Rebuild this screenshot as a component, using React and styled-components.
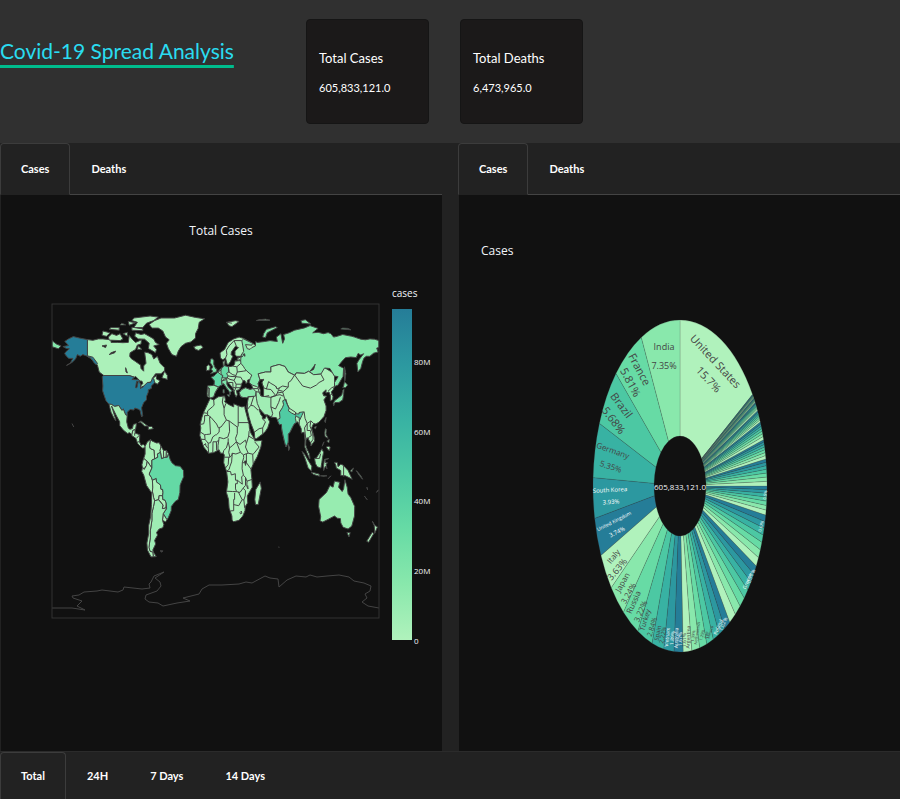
import React, { useState } from 'react';
import styled, { createGlobalStyle } from 'styled-components';

const GlobalStyle = createGlobalStyle`
  *, *::before, *::after { box-sizing: border-box; }
  body { margin: 0; background: #fff; color: #fff; font-family: Lato, "Liberation Sans", sans-serif; }
`;

const Page = styled.div`
  display: flex;
  flex-direction: column;
  min-height: calc(100vh - 1px);
  background: #222;
`;

const Header = styled.header`
  display: grid;
  grid-template-columns: 34% 1fr;
  min-height: 143px;
  background: #303030;
`;

const Title = styled.h1`
  margin: 0;
  padding-top: 36px;
  font-size: 21px;
  line-height: 30px;
  font-weight: 400;
`;

const TitleLink = styled.a`
  color: #2adcf0;
  text-decoration: underline;
  text-decoration-color: #00bc8c;
  text-decoration-thickness: 3px;
  text-underline-offset: 6px;
  white-space: nowrap;
`;

const Stats = styled.div`
  display: flex;
  gap: 31px;
  align-items: flex-start;
  padding-top: 19px;
`;

const StatCard = styled.section`
  width: 123px;
  min-height: 105px;
  padding: 24px 12px 16px;
  border: 1px solid #151515;
  border-radius: 4px;
  background: #1b1919;
`;

const StatLabel = styled.h2`
  margin: 0;
  font-size: 13px;
  line-height: 28px;
  font-weight: 400;
`;

const StatValue = styled.p`
  margin: 0;
  font-size: 11px;
  line-height: 32px;
`;

const Panels = styled.main`
  flex: 1;
  display: grid;
  grid-template-columns: 1fr 1fr;
  gap: 16px;
`;

const Panel = styled.section`
  display: flex;
  flex-direction: column;
  min-width: 0;
`;

const TabList = styled.div`
  display: flex;
  height: ${(p) => (p.$bottom ? 48 : 52)}px;
  border-bottom: ${(p) => (p.$bottom ? 'none' : '1px solid #444')};
  border-top: ${(p) => (p.$bottom ? '1px solid #2b2b2b' : 'none')};
`;

const Tab = styled.button`
  padding: 0 20px;
  margin-bottom: -1px;
  font: 700 11px/20px Lato, "Liberation Sans", sans-serif;
  color: #fff;
  white-space: nowrap;
  cursor: pointer;
  border: 1px solid ${(p) => (p.$active ? '#3c3c3c' : 'transparent')};
  border-bottom-color: ${(p) => (p.$active ? '#222' : 'transparent')};
  border-radius: 4px 4px 0 0;
  background: ${(p) => (p.$active ? '#222' : 'none')};
`;

const ChartArea = styled.div`
  flex: 1;
  background: #111;
  border-left: 1px solid #222;
`;

const Chart = styled.svg`
  display: block;
  width: 100%;
  height: auto;
  font-family: "Open Sans", "DejaVu Sans", sans-serif;
`;

const ChartText = styled.text`
  font-size: ${(p) => p.$size}px;
  fill: ${(p) => p.$fill || '#f2f5fa'};
`;

const Land = styled.path`
  fill: ${(p) => p.$fill};
  stroke: #444;
  stroke-width: 1;
  stroke-linejoin: round;
`;

const SCALE = ['#b0f2bc', '#89e8ac', '#67dba5', '#4cc8a3', '#38b2a3', '#2c98a0', '#257d98'];
const MINT = '#acf1ba';

const MAP_W = 327;
const MAP_H = 314;

function project(points, close = true) {
  const d = points.trim().split(/\s+/).map((pair) => {
    const [lon, lat] = pair.split(',').map(Number);
    return `${(((lon + 180) / 360) * MAP_W).toFixed(1)},${(((90 - lat) / 180) * MAP_H).toFixed(1)}`;
  });
  return `M${d.join('L')}${close ? 'Z' : ''}`;
}

const COUNTRIES = [
  // Eurasian land mass
  [MINT, '-9,37 -9.3,38.7 -8.8,43 -2,43.4 -1.2,44.5 -1.2,46 -4.7,48 -1.5,48.8 0,49.6 2.5,51 4.5,52.3 7,53.5 8.7,54 8.2,57 10.5,57.6 10,55 11,54 14.2,54 19,54.4 21,55.5 21.5,57.5 24,57.3 24,59 28,59.6 30,60 23,60 21.5,61 21.5,63 25.3,65 22,65.8 17.5,62.5 17.2,61 19,60 16.5,57 14.2,55.4 12.8,55.5 11,59 8,58 5.5,59 5,62 10,64 14,68 20,70 26,71 31,70.3 41,67.5 60,60 100,60 131,50 131,42.7 129.7,41 127.5,39.5 129.4,37 129,35.2 126.4,34.5 126.5,37.5 125,39.5 121.5,39 121.8,40.8 118,39.1 119,37.4 122.4,37.2 119.3,35 121.8,31.5 121.8,29 119.5,25.5 114,22.3 110.5,21.2 108,21.5 105.8,19 109,13 109,11.5 105,8.6 105,10.3 102.5,12.2 101,13.4 99.5,12 99.3,9.3 100.5,7.2 103.4,4 104.2,1.3 103.5,1.4 100.5,5 98.3,8 98.5,12 97.5,16.5 94.5,16 94.3,18.5 92.2,21 90.5,22.5 87,21.5 85,19.7 82,16.5 80.2,15.5 80.2,12 79.8,10.3 77.6,8 76,11 73.8,16 72.8,19 72.7,21 70.5,20.8 69,22.3 67,24.8 61.5,25.1 57.2,26.5 54.5,26.5 51,28.5 48.5,30 48,29.5 50,26.5 51.5,25.8 51.6,24.2 54.5,24.2 56.3,26 59.7,22.5 57.5,19 55,17 52,15.5 45,12.8 43.3,12.8 42.7,16.5 39,21.5 37,25 34.9,29.5 34.3,31.3 36,35.8 36,36.8 34,36.3 30.5,36.4 27.5,37 26.2,39.2 29,41 33,42 38,41 41.5,41.5 39,44 37,45.2 38.5,47 35.2,46.3 35,45 33.5,44.5 32.5,46 30.7,46.2 28.6,44 28,42.5 26,40.8 23,40.5 24,38 22.7,36.6 21.2,38.3 19.4,41.5 14,45 12.5,45.5 12.4,44 14,42.5 18.4,40.2 16.6,39.7 16,38 15,40 12,42 9,44.3 6,43.2 3.2,43.2 3,41.8 -.3,39.3 -2,36.8 -5.5,36.1'],
  // Russia, its arctic islands and far east
  ['#85e7ab', '31,70 33,69.4 41,67.5 40,66.4 33,66.7 35,64.4 38,64 40,65 44,66 44,68.5 46,68 54,68.5 60,69 68,68.5 67,71 72,73 74,67.5 76,70 75,72.5 81,73.5 87,75 98,76.3 104,77.6 113,76 107,73.5 113,73.8 119,73 124,73.6 127,73 130,71 134,71.5 140,72.5 150,71.5 153,71 160,69.8 165,69.5 170,70 175,69.8 180,69 180,65 177.5,64.7 179,62.5 174,61.8 170,60 166,60 163.5,59 162,57 160,53 156.7,51 155.7,56 158,58 163,61.5 160,60.7 157,61.7 155,59.3 149,59.6 143,59.2 139,57 135.5,54.7 141,53.2 140.5,48.5 135,43.5 131,42.7 131,45 135,48.3 130.8,48.7 126,53 120,53.3 116,49.8 108,49.5 102.5,51.4 98,50.2 89,50.5 87,49.2 80,51 76.5,54.2 70,55.3 61,54 61,51 55,51 47,50 49,46.5 47,44.5 47.5,43 48,41.8 45,42.7 41,43.4 39,44 37,45.2 38.2,47.2 40,49.3 38,50 34,51.8 32,53 31,54 28,56 27.7,57.5 28,59.5 30,60 28,60.5 31,62.8 30,66 29,69'],
  ['#85e7ab', '52,71 55,70.7 57,73.5 68,76.5 66,77 56,75.5 53,73'],
  ['#85e7ab', '95,79 105,78.5 99,81 94,80.5'], ['#85e7ab', '138,75.7 149,75.2 146,76 140,76.2'],
  ['#85e7ab', '142,54 143.5,50 142.5,46 142,48'], [MINT, '45,80.5 60,80.7 55,81.3 48,81'],
  [MINT, '12,79.5 22,80.4 26,80 18,77 15,77.5'],
  // Western and southern Asia
  [MINT, '47,50 55,51 61,51 61,54 70,55.3 76.5,54.2 80,51 87,49.2 83,46 80.3,45 80,42.3 74,43 70.5,42 68,41.3 66,43 61,44.5 58.5,45.5 56,41.3 53,42 51,44.8 53,46.8 49,46.5'],
  [MINT, '87.5,49 90.9,46.5 96,43 104.5,41.8 111,43.5 114,45 119.5,46.5 116,49.8 108,49.5 102.5,51.4 98,50.2 89,50.5'],
  ['#50cba3', '68.2,23.7 71,24.5 70.5,28 73.5,30.5 75,32.3 74,34.5 77.5,35.5 79,32.5 81,30.2 80.3,28.8 84,27.4 88,26.4 88.2,28 89,27 92,27 92,27.8 97,28.2 95,26 93.2,24 92.3,23 92.2,25 89.8,25.3 88.5,26 88,24.5 89,22 87,21.5 85,19.7 82,16.5 80.2,15.5 80.2,12 79.8,10.3 77.6,8 76,11 73.8,16 72.8,19 72.7,21 70.5,20.8 69,22.3'],
  ['#a0edb4', '44.5,39.7 48,39.5 50,37.4 54,37 61,36.5 61,31 63,27.2 61.5,25.1 57.2,26.5 54.5,26.5 51,28.5 48.5,30 46,33 45,36'],
  ['#8be8ad', '26.2,39.2 29,41 33,42 38,41 41.5,41.5 44.5,39.7 44,37.2 36,36.8 34,36.3 30.5,36.4 27.5,37'],
  // Europe
  ['#60d7a5', '-1.5,43.4 -1.2,46 -4.7,48 -1.5,48.8 0,49.6 2.5,51 6,49.5 8,49 7,47.5 6.5,46 7.5,43.8 3,42.5'],
  ['#68dba5', '7,53.5 8.7,54 9,54.8 14.2,54 14.8,51 12.2,50.2 13.8,48.8 13,47.6 7.6,47.7 8,49 6,50 6,52'],
  ['#94ebaf', '-8.8,43 -1.8,43.4 3.2,42.4 -.3,39.3 -2,36.8 -5.5,36.1 -7.3,37.2 -7,41.8 -8.8,42'],
  ['#7ce2a9', '7,44 7,46 12.5,46.7 12.4,44 14,42.5 18.4,40.2 16.6,39.7 16,38 15,40 12,42 9,44.3'],
  ['#7ce2a9', '8.3,39 9.8,39 9.5,41 8.3,41'], ['#7ce2a9', '12.5,38 15.5,38 15,36.8'],
  ['#79e1a8', '-5.5,50 1.3,51.2 1.5,52.8 0,53 -2,55.5 -1.8,57.5 -3.2,58.6 -5.3,58.5 -6,56.5 -3,54 -4.7,52.5 -3,51.5'],
  [MINT, '-10,51.7 -6.3,52.2 -6,54.5 -8,55.2 -10,54'],
  // Africa
  [MINT, '-6,35.8 -2,35 3,36.8 10,37.3 11,35 10,34 15,32.3 20,31 20,32.8 25,31.7 29,31 32.3,31.3 32.5,30 34,27 36,23 37,21 37.3,18.8 39,16 43,12.5 43.3,11.5 51.2,11.8 50,8 46,2.5 41.5,-1.8 39,-5 40,-10 40.5,-15 35,-20 35.5,-24 32.8,-26 32.5,-28.5 30,-31.5 26,-34 20,-34.8 18.3,-34 18,-31.5 15,-27 14.3,-22 12,-18 13.7,-12 12.2,-6 9,-1 9.7,3.5 8.5,4.5 5.5,4.5 4,6.4 -2,4.8 -7.5,4.4 -13,8 -15,11 -17.3,14.7 -16.2,19 -17,21 -15,25 -13,28 -9.8,31.5'],
  [MINT, '49.3,-12 50.4,-15.7 47,-25 44,-25 43.3,-22 44.4,-16.3'],
  // North America
  [MINT, '-141,69.6 -141,60 -137,58.5 -134,57 -130,55 -128,51 -123,49 -95,49 -89,48 -84,46.5 -82.5,45.3 -82.5,42 -79,42.8 -76,44 -74.5,45 -71,45.3 -69,47.3 -67,45 -64,44 -61,46 -65,47 -65,49 -70,47 -66,50 -60,50 -56,52 -56,53.5 -61,56 -64,60 -68,58.5 -70,61 -74,62 -78,62.5 -77,58 -76.5,56 -79,54.5 -79,51.5 -82,53 -82.5,55 -88,57 -93,58.8 -94.5,60 -94,62 -88,64 -86,66.5 -82,67 -81.5,69.5 -88,68 -91,69.5 -95,72 -96,68 -102,67.8 -108,68 -115,68 -115,69.5 -124,70 -129,70 -135,69.2'],
  ['#257d98', '-141,69.6 -150,70.5 -156.5,71.3 -162,70 -166,68.5 -163,67 -162,66.2 -168,65.6 -164,64.5 -161,64.3 -165,62.5 -166,61.5 -164,60 -161.5,58.8 -157,58.8 -160,56 -164,54.8 -158,56.5 -154,58.5 -152,61 -149,60 -146,61 -141,60 -137,58.9 -134,56.5 -131,55 -130,56 -135,59.5 -141,60.3'],
  ['#257d98', '-124.7,48.4 -124,43 -124.3,40.3 -122.5,37.5 -120.6,34.5 -117.2,32.5 -114.8,32.5 -111,31.3 -106.5,31.8 -103,29 -101.5,29.8 -99,26.5 -97.2,26 -97,28 -94,29.6 -90,29.2 -88.8,30.4 -85,29.7 -83,29 -82.5,27.5 -81.2,25.2 -80.2,26 -81.4,30.5 -79,33.5 -76,35 -76,37 -74,39.5 -74,40.8 -70.5,41.7 -70.7,43 -67,44.8 -67.8,47 -69.2,47.4 -71.5,45 -75,45 -79,43 -82.5,42 -82.5,45.5 -84.5,46.5 -89.5,48 -95,49 -123,49'],
  ['#a5efb6', '-117.2,32.5 -114.8,32.5 -111,31.3 -106.5,31.8 -103,29 -101.5,29.8 -99,26.5 -97.2,26 -97.8,22.5 -96,19 -94.5,18.2 -91.5,18.6 -90.4,21 -87,21.5 -88,18.2 -91,17.5 -92,15 -94.5,16.2 -97,15.8 -101.5,17.7 -105.5,20.3 -105.5,22.5 -109,25.8 -112.5,29.5 -114.5,31.5 -113,29 -110,24 -109.8,23 -112.2,25 -115,28'],
  [MINT, '-92,15 -91,17.5 -88.5,18 -88.5,16 -83.3,15 -83.7,11 -82,9 -79.5,9.5 -77.5,8.5 -78,7.5 -80.5,7.4 -83,8.5 -85.7,10 -87.7,13 -92,14.5'],
  [MINT, '-85,22 -82,23 -77,21 -74.5,20 -78,20 -82,22'], [MINT, '-74,19.8 -70,19.8 -68.5,18.5 -74,18'],
  [MINT, '-73,78.3 -67,80.5 -60,82 -45,82 -33,83.6 -22,82.3 -12,81.5 -18,79.5 -19,76 -22,73 -22,70.5 -27,68.3 -33,67.5 -38,65.5 -41,63 -43,60 -48,61 -52,64.5 -54,67.5 -51,69.5 -55,71 -58,74.5 -63,76.2 -70,76.2'],
  [MINT, '-62,66.8 -66,68 -68,70 -73,71.5 -78,73 -82,72.5 -88,73.5 -89,71.5 -85,70 -78,69.8 -73,67.5 -74,64.5 -69,63 -66,62 -65,64 -68,66'],
  [MINT, '-117,69.3 -105,69 -102,70 -105,73 -109,72 -114,73 -118,71'],
  [MINT, '-125,72 -120,71.5 -116,73.5 -124,74.5'],
  [MINT, '-90,76.5 -80,76.5 -76,79 -68,80.5 -63,82.5 -72,83.1 -90,82 -92,80.5 -86,79.5'],
  [MINT, '-92,75 -80,74.7 -80,75.7 -92,76.7'], [MINT, '-96,80 -88,79.3 -95,77.8'],
  [MINT, '-117,75.5 -106,75 -106,76.5 -115,76.5'], [MINT, '-102,73 -97,71.5 -97,73.8'],
  [MINT, '-105,78 -99,78 -103,79'], [MINT, '-86,64 -81,64 -85,66'], [MINT, '-59,47.7 -53,46.8 -53,49 -56,51.5'],
  [MINT, '-24,65.5 -22,64 -18.5,63.4 -13.8,65 -16,66.5 -21,66'],
  ['#85e7ab', '-180,69 -175,67 -170,66 -173,64.3 -180,65.5'],
  // South America
  ['#a8f0b7', '-77.5,8.5 -75,11 -71.5,12.3 -72.5,9 -72,7.2 -67.5,6.2 -67,1.2 -70,.5 -70,-4 -75,-.2 -77.5,.8 -79,1.5 -77.5,4'],
  [MINT, '-71.5,12.3 -70,11.5 -65,10.3 -62,10.5 -60,8.5 -61,6 -60.5,5 -64,4 -63.5,2.2 -67,1.2 -67.5,6.2 -72,7.2 -72.5,9'],
  [MINT, '-60,8.5 -57.3,6 -57,2 -59.5,1.3 -60.5,5 -61,6'], [MINT, '-57.3,6 -54,6 -54.3,2.2 -57,2'], [MINT, '-54,6 -51.7,4.2 -53,2.2 -54.3,2.2'],
  [MINT, '-79,1.5 -77.5,.8 -75.2,-.2 -76,-2.5 -78.5,-4.5 -80.3,-4.3 -81,-2.2 -80,0'],
  [MINT, '-80.3,-3.5 -78.5,-4.8 -76,-2.5 -75.2,-.2 -70,-4 -73,-7.5 -70.5,-9.5 -69.5,-11 -69,-15 -69.5,-17.5 -70.4,-18.3 -76,-14 -79,-8 -81.2,-6'],
  [MINT, '-69.5,-11 -65.3,-10 -65,-12 -60.5,-13.7 -60,-16.2 -58.2,-16.3 -57.8,-18 -58.2,-20 -62,-19.8 -62.7,-22.2 -67,-22.8 -68.2,-21 -69.5,-17.5 -69,-15'],
  [MINT, '-62.5,-22.2 -62,-19.8 -58.2,-20 -57.9,-22.1 -55.8,-22.3 -54.3,-24 -54.7,-27 -58.6,-27.3 -57.8,-25.2'],
  ['#64d9a5', '-51.7,4.2 -50,1 -48,-1 -44,-2.7 -39,-3 -35.2,-5.5 -35,-9 -37.5,-12 -39,-14 -39.2,-18 -41,-22 -44.5,-23.2 -48.5,-26 -48.8,-28.5 -52,-32.5 -53.4,-33.7 -57.6,-30.2 -53.8,-27.2 -54.3,-24 -55.8,-22.3 -57.9,-22.1 -58.2,-20 -57.8,-18 -58.2,-16.3 -60,-16.2 -60.5,-13.7 -65,-12 -65.3,-10 -69.5,-11 -70.5,-9.5 -73,-7.5 -70,-4 -70,.5 -67,1.2 -63.5,2.2 -64,4 -60.5,5 -59.5,1.3 -56,2 -53,2.2'],
  [MINT, '-57.6,-30.2 -53.4,-33.7 -55,-34.9 -58.3,-34'],
  ['#9eedb4', '-67,-22.8 -62.7,-22.2 -57.8,-25.2 -58.6,-27.3 -54.7,-27 -53.8,-27.2 -57.6,-30.2 -58.3,-34 -56.8,-36.5 -58,-38.3 -62,-39 -65,-41 -63.7,-42.5 -67,-45.5 -65.8,-47.5 -69,-51 -68.3,-52.3 -65.2,-54.8 -68.5,-54.9 -69,-52.2 -72,-51.8 -73.3,-49.5 -71.8,-44 -71.8,-40 -70,-34 -70,-30 -68.3,-26'],
  [MINT, '-70.4,-18.3 -69.5,-17.5 -68.2,-21 -67,-22.8 -68.3,-26 -70,-30 -70,-34 -71.8,-40 -71.8,-44 -73.3,-49.5 -72,-51.8 -69,-52.2 -68.5,-54.9 -71,-55 -75,-51 -75.5,-47 -73.5,-41.5 -73.5,-37 -71.5,-32 -70.5,-25'],
  ['#444', '-61,-51.5 -58,-51.5 -59,-52.3'],
  // Eastern Asia and Oceania
  ['#8ae8ac', '130,31.5 131.5,33.5 136,33.6 140,35 141,38 141.5,41.3 140,40.5 139,37.8 136,36.5 131,34.5 129.7,33'],
  ['#8ae8ac', '140,42 143,42 145.5,43.5 142,45.5 141,43'],
  [MINT, '120.2,23 121.8,25 121,22'], [MINT, '80,9.5 81.8,7.5 80.5,6'], [MINT, '108.7,19.3 111,19.8 110,18.3'],
  ['#a5efb6', '95.3,5.5 98,4 103,-.5 106,-3 105.7,-5.8 102,-4 98.5,1.5'],
  ['#a5efb6', '105.3,-6.6 108,-6.7 114,-7.5 114.5,-8.7 108,-7.7'],
  ['#a5efb6', '109,1.5 111,1.8 115,5 117,7 119,5 117.8,2 117,-1 116,-4 112,-3.3 110,-1.5'],
  ['#a5efb6', '119,-5.5 119,-2.5 120,1 125,1.5 120.5,.5 121,-1 123.3,-1 121.8,-2 122.7,-4.5 121,-3'],
  [MINT, '120.2,16 121,18.5 122.2,18 121.5,15.5 124,13 120.7,14'], [MINT, '122,8 124,8.5 126.3,8 125.5,6 124,6.5'],
  [MINT, '117.5,8.5 119.5,11'], [MINT, '122.5,11.5 125.3,12.3 124.7,10.3'],
  ['#a5efb6', '131,-.8 134,-.8 135,-3.3 138,-1.8 141,-2.6 146,-5.5 150.5,-10.5 147,-9.5 143,-8.5 138,-8.3 138,-5.5 133,-4 132.5,-2.5'],
  [MINT, '148.5,-5.7 152,-4 150,-6.3'], [MINT, '155,-5.5 160,-8.5 162,-10.5 158,-8'], [MINT, '164,-20.2 167,-22.2'],
  [MINT, '166.7,-15 167.5,-16.5'], [MINT, '177.3,-18 179.5,-16.5'], [MINT, '124,-10.2 127,-8.5'], [MINT, '115.5,-8.5 119,-8.7 122.8,-8.5'],
  ['#97ecb0', '114,-22 113.5,-26 115.8,-32 115,-34.3 118,-35 124,-33.5 131,-31.5 134,-32.8 137.5,-33 138,-35.5 140.5,-38 146,-39 150,-37.3 153,-31.5 153.3,-26 149,-21 146,-19 145,-15 142.5,-10.7 141,-16 139.5,-17.5 135.5,-15 136.8,-12.2 131,-11.5 129.5,-15 126,-14 122.2,-18'],
  ['#97ecb0', '144.7,-41 148.3,-41 147,-43.5'],
  [MINT, '172.7,-34.5 175.5,-37 178.3,-37.8 175.3,-41.5 175,-39 174.7,-37'], [MINT, '172.7,-40.7 174,-41.8 171,-44.5 168.5,-46.6 166.5,-46'],
];

const BORDERS = [
  '-2,35 -1.5,32 -3.5,31 -8.7,28.7 -8.7,27.3 -13,27.7', '-8.7,27.3 -8.7,26 -12,26 -12,23.5 -13,21.3 -17,21',
  '-8.7,26.5 -5,25 -6.5,25 -5.5,15.5 -10,15.2 -12,15 -16.3,16.5', '-5,25 1.2,21.2 3.2,19 4.2,19.2 6,19.5 12,23.5 9.5,26.5 9.5,30.2 7.5,33.8 8.5,36.9',
  '9.5,30.2 11.5,33', '25,31.7 25,20', '25,22 37,22', '12,23.5 15,23 24,19.5 24,15.7 22,13 23,11', '24,19.5 25,20',
  '15,23 15.5,17 13.5,13.7 9,12.8 4,13.5 3.6,11.8', '4.2,19.2 4,16.5 1,15 .2,15 -3,13.8 -5.5,10.5 -8,10.2 -11.4,12.3 -12,15',
  '14,13 14,11 12,7.5 9,6 8.5,4.5', '2.7,6.3 2.7,9 3.6,11.8 1,11 1.2,6', '-3,5 -2.8,11 1,11', '-7.5,4.4 -8,8 -8,10.2',
  '-13,9 -11,10 -10.5,8.5 -8.5,7.5', '-16.7,12.5 -11.4,12.3', '14,11 15.5,7.5 14.5,5 16,2.2 9.7,2.2', '15.5,7.5 19,9 23,11 27.4,5 22.5,4 18.5,4.5 18,3.5 16,2.2',
  '14.5,2.2 14,-2 11,-4', '18.5,4.5 17.7,-.5 16,-3 15,-4.8 12.2,-5.9', '12.5,-6 16.5,-6 17.5,-8 21.8,-7.3 22,-11 24,-11 29.5,-13.3 28.7,-9 30.7,-8.2 29.3,-4.5 29.5,-1 31,2 30.8,3.5 27.4,5',
  '12,-17.3 18.5,-17.5 23.3,-17.6 22,-16 22,-13 24,-13 24,-11', '21,-18.3 21,-22 20,-22 20,-28.5 16.5,-28.6', '20,-25 25.5,-25.6 29.4,-22.2 25.2,-17.8',
  '23.3,-17.6 27,-18 30.4,-15.6 33,-17 32.7,-20 31.3,-22.3 32,-26.8', '29.4,-22.2 31.3,-22.3', '30.4,-15.6 33,-14 33,-9.4 30.7,-8.2', '33,-9.4 34.7,-11.6 40.5,-10.5',
  '34.7,-11.6 34.5,-14.5 35.8,-16 35.5,-14', '39.2,-4.7 34,-1 29.5,-1', '34,-1 34,4.2', '41.5,-1.8 41,3.9 42,4.2 48,8 43,11', '41,3.9 36,4.5 34,4.2 30.8,3.5',
  '23,11 27,9.5 33,12 34,10 33,8 36,4.5', '34,10 36.5,14.3 37,17 38.5,18', '36.5,14.3 42.4,12.5', '27,-29.5 28.5,-28.7 29,-30 27.5,-30.3 27,-29.5',
  '80,42.3 74,39.5 76,36 79,32.5 81,30.3 88,28', '97.5,28.3 98.5,24.5 101,21.5 105,23 108,21.5', '101,21.5 98,19 98.7,16 99.5,12', '101,21.5 101,17.5 104.5,17.5 105.5,14.5 102.5,13.5 102.5,12.2',
  '105,23 104,20 107,16 107.5,12.5 105,10.5', '102,6 100.2,6.5', '61,36.5 65,37.5 71,38 74.5,37.2', '61,31 66,29.8 69.5,33.5 71.5,36.5', '61,36.5 66.5,37.4 61,41 56,41.3',
  '53,37 54,37 59,37.5', '66.5,37.4 68,39 70.5,42', '68,39 74,39.5', '70,40.5 74,40', '66,43 68,41.3', '92.3,23 92.2,21', '124,40 128,42 131,42.7', '126.5,37.8 128.5,38.5',
  '35,29.5 39,32 42,37', '39,32 42,31.5 47,29', '36,36.8 42,37', '34.9,29.5 35.5,33', '42.7,16.5 48,18.5 52,19 55,22.5 51.6,24.2', '52,19 52,15.5', '41.5,41.5 47,41.5 48,39.5',
  '14.2,54 14.8,51 19,49.5 22.5,49 24,51 23.5,54 19,54.4', '13.8,48.8 17,48.5 22.5,48.3 22.5,49', '13,47.6 16,46.8 20.5,46.2 22.5,48.3 28,48 30,46', '20.5,46.2 22.7,44 28.6,44',
  '22.7,44 22.5,42 28,42', '14,45 19,45 19.3,42 22.5,42 20.5,39.7', '24,51 30.5,51.5 34,51.8', '23.5,54 28,56', '21.5,57.5 27.7,57.5', '24,59 27.7,57.5', '6,52 3,51.2',
  '7,46 10,47 13,47.6', '23,65.8 20.5,69 29,69', '11,59 12.5,61 12,63.5 15,66 20.5,69', '-7.3,37.2 -7,41.8 -8.8,42',
  '-89,14.5 -89,16', '-87,13 -83.5,15', '-85.7,11 -83.7,11', '110,1.5 114.5,1.5 115.7,4.2', '141,-2.6 141,-9', '-158,21.5 -156,19.5', '69,-49.3 70.5,-49.5', '12,79.5 18,79',
];

const LAKES = [
  '47,44.5 49,46.5 53,46.8 51,44.8 53,42 53,37 50,37.4 49,39 49.5,40.5 47.5,43',
  '-125,66 -120,66.5 -121,65', '-117,61 -111,62 -110,63 -115,62', '-99,53.5 -97,50.5 -98.5,51', '-92,46.7 -87,46.6 -84.7,46.7 -88,48.5',
  '-88,42 -86.5,42 -85,45.8 -87,45.5', '-84,45.8 -82,43.3 -80,44.5 -81,45.8', '-83,41.5 -79,42.7 -80.5,42.6', '32,0 34,0 33,-2.5', '30,61 32.5,60 32,61.5', '104,51.5 108,52.5 109.8,55.5 108,54',
];

const ANTARCTICA = 'M0,304L20,304L33,306L25,302L30,297L21,294L20,292L27,291L32,288L45,287L50,286L66,288L71,286L72,283L90,285L98,284L97,280L99,278L102,272L107,270L112,268L103,274L108,278L109,282L105,287L94,291L93,295L97,298L106,299L111,302L125,299L138,297L131,294L147,290L150,285L157,281L170,281L187,280L194,278L200,279L213,272L218,274L226,275L227,283L235,276L244,272L254,273L258,271L265,273L275,272L287,271L297,273L302,277L312,279L319,282L318,287L313,290L315,294L310,298L316,302L327,304';

function WorldMap({ label }) {
  const ticks = [['80M', 166], ['60M', 236], ['40M', 305], ['20M', 375], ['0', 445]];
  return (
    <Chart viewBox="0 0 441 555" role="img" aria-label={label}>
      <defs>
        <linearGradient id="scale" x1="0" y1="1" x2="0" y2="0">
          {SCALE.map((c, i) => <stop key={c} offset={i / 6} stopColor={c} />)}
        </linearGradient>
        <clipPath id="frame"><rect width={MAP_W} height={MAP_H} /></clipPath>
      </defs>
      <ChartText x="220" y="40" textAnchor="middle" $size={12}>{label}</ChartText>
      <g transform="translate(51 109)">
        <g clipPath="url(#frame)">
          {COUNTRIES.map(([fill, pts], i) => <Land key={i} $fill={fill} d={project(pts)} />)}
          {BORDERS.map((pts, i) => <Land key={i} $fill="none" d={project(pts, false)} />)}
          {LAKES.map((pts, i) => <Land key={i} $fill="#111" d={project(pts)} />)}
          <Land $fill="none" d={ANTARCTICA} />
        </g>
        <rect width={MAP_W} height={MAP_H} fill="none" stroke="#333" strokeWidth="1" />
      </g>
      <ChartText x="391" y="102" $size={10}>cases</ChartText>
      <rect x="391" y="114" width="20" height="331" fill="url(#scale)" />
      {ticks.map(([t, y]) => <ChartText key={t} x="413" y={y + 4} $size={8}>{t}</ChartText>)}
    </Chart>
  );
}

const LARGE = [15.7, 7.35, 5.81, 5.68, 5.35, 3.93, 3.74, 3.63, 3.24, 3.22, 2.84, 2.22, 1.89, 1.67];
const CYCLES = [9.1, 7.3, 5.2, 2.8, 2.6, 1.9, 1.8, 1.2, 0.9, 0.5, 0.4];
const FALLOFF = [1.22, 1.12, 1.04, 0.98, 0.92, 0.88, 0.84];
const SHARES = [...LARGE, ...CYCLES.flatMap((c) => FALLOFF.map((f) => (c / 7) * f))];

function buildSlices() {
  const rest = SHARES.slice(1).reduce((a, b) => a + b, 0);
  const unit = (100 - SHARES[0]) / rest;
  const slices = [{ from: 0, to: SHARES[0], fill: SCALE[0] }];
  let end = 100;
  SHARES.slice(1).forEach((s, i) => {
    const start = end - s * unit;
    slices.push({ from: start, to: end, fill: SCALE[(i + 1) % 7] });
    end = start;
  });
  return slices;
}

function slicePath({ from, to }) {
  const at = (share, rx, ry) => {
    const a = (share / 100) * 2 * Math.PI;
    return `${(rx * Math.sin(a)).toFixed(2)},${(-ry * Math.cos(a)).toFixed(2)}`;
  };
  return `M${at(from, 26, 50)}L${at(from, 87, 166)}A87,166 0 0 1 ${at(to, 87, 166)}L${at(to, 26, 50)}A26,50 0 0 0 ${at(from, 26, 50)}Z`;
}

// text, x, y, rotation, size, light
const LABELS = [
  ['United States', 36, -125, 47, 11], ['15.7%', 29, -107, 47, 11],
  ['India', -16, -140, 0, 9], ['7.35%', -16, -121, 0, 9],
  ['France', -40, -117, 62, 11], ['5.81%', -49, -104, 62, 11],
  ['Brazil', -58, -81, 53, 11], ['5.68%', -66, -66, 53, 11],
  ['Germany', -67, -36, 20, 8], ['5.35%', -69, -20, 18, 8],
  ['South Korea', -70, 4, -3, 6, true], ['3.93%', -69, 16, -3, 6, true],
  ['United Kingdom', -66, 35, -27, 5, true], ['3.74%', -63, 46, -27, 6, true],
  ['Italy', -67, 70, -50, 8], ['3.63%', -63, 83, -50, 9],
  ['Japan', -58, 96, -60, 8], ['3.24%', -52, 107, -60, 8],
  ['Russia', -47, 116, -66, 8], ['3.22%', -40, 125, -66, 8],
  ['Turkey', -35, 134, -73, 7], ['2.84%', -28, 141, -73, 7],
  ['Spain', -22, 147, -79, 6], ['2.22%', -17, 149, -79, 6],
  ['Vietnam', -13, 151, -84, 5, true], ['1.89%', -8, 152, -84, 5, true],
  ['Australia', -4, 152, -88, 5, true], ['1.67%', 0, 153, -88, 5, true],
  ['1.61%', 4, 154, -88, 5], ['Argentina', 8, 151, -88, 5], ['1.39%', 13, 150, -82, 4], ['Netherlands', 17, 147, -82, 4],
  ['1.25%', 22, 149, -76, 4], ['Iran', 26, 149, -74, 4], ['Mexico', 30, 146, -70, 4],
  ['Poland', 38, 141, -68, 5, true], ['1.02%', 43, 138, -68, 5, true],
  ['Greece', 67, 95, -68, 5, true], ['0.77%', 71, 90, -68, 5, true],
  ['0.67%', 81, 40, -76, 4, true], ['0.5%', 85, 9, -80, 4, true],
];

function PieChart({ label }) {
  return (
    <Chart viewBox="0 0 441 555" role="img" aria-label={label}>
      <ChartText x="22" y="60" $size={12}>{label}</ChartText>
      <g transform="translate(221 291)">
        {buildSlices().map((s, i) => (
          <path key={i} d={slicePath(s)} fill={s.fill} stroke="#444" strokeWidth="1" strokeOpacity="0.2" />
        ))}
        {LABELS.map(([t, x, y, r, size, light]) => (
          <ChartText key={t + x} $size={size} $fill={light ? '#fff' : '#444'} textAnchor="middle" dominantBaseline="central" transform={`translate(${x} ${y}) rotate(${r})`}>
            {t}
          </ChartText>
        ))}
        <ChartText y="4" textAnchor="middle" $size={8}>605,833,121.0</ChartText>
      </g>
    </Chart>
  );
}

function Tabs({ items, label, bottom, value, onChange }) {
  return (
    <TabList role="tablist" aria-label={label} $bottom={bottom}>
      {items.map((t) => (
        <Tab key={t} type="button" role="tab" aria-selected={t === value} $active={t === value} onClick={() => onChange(t)}>
          {t}
        </Tab>
      ))}
    </TabList>
  );
}

export default function App() {
  const [mapTab, setMapTab] = useState('Cases');
  const [pieTab, setPieTab] = useState('Cases');
  const [period, setPeriod] = useState('Total');
  return (
    <Page>
      <GlobalStyle />
      <Header>
        <Title><TitleLink href="#">Covid-19 Spread Analysis</TitleLink></Title>
        <Stats>
          <StatCard><StatLabel>Total Cases</StatLabel><StatValue>605,833,121.0</StatValue></StatCard>
          <StatCard><StatLabel>Total Deaths</StatLabel><StatValue>6,473,965.0</StatValue></StatCard>
        </Stats>
      </Header>
      <Panels>
        <Panel>
          <Tabs label="Map" items={['Cases', 'Deaths']} value={mapTab} onChange={setMapTab} />
          <ChartArea><WorldMap label={`Total ${mapTab}`} /></ChartArea>
        </Panel>
        <Panel>
          <Tabs label="Share by country" items={['Cases', 'Deaths']} value={pieTab} onChange={setPieTab} />
          <ChartArea><PieChart label={pieTab} /></ChartArea>
        </Panel>
      </Panels>
      <Tabs bottom label="Period" items={['Total', '24H', '7 Days', '14 Days']} value={period} onChange={setPeriod} />
    </Page>
  );
}
